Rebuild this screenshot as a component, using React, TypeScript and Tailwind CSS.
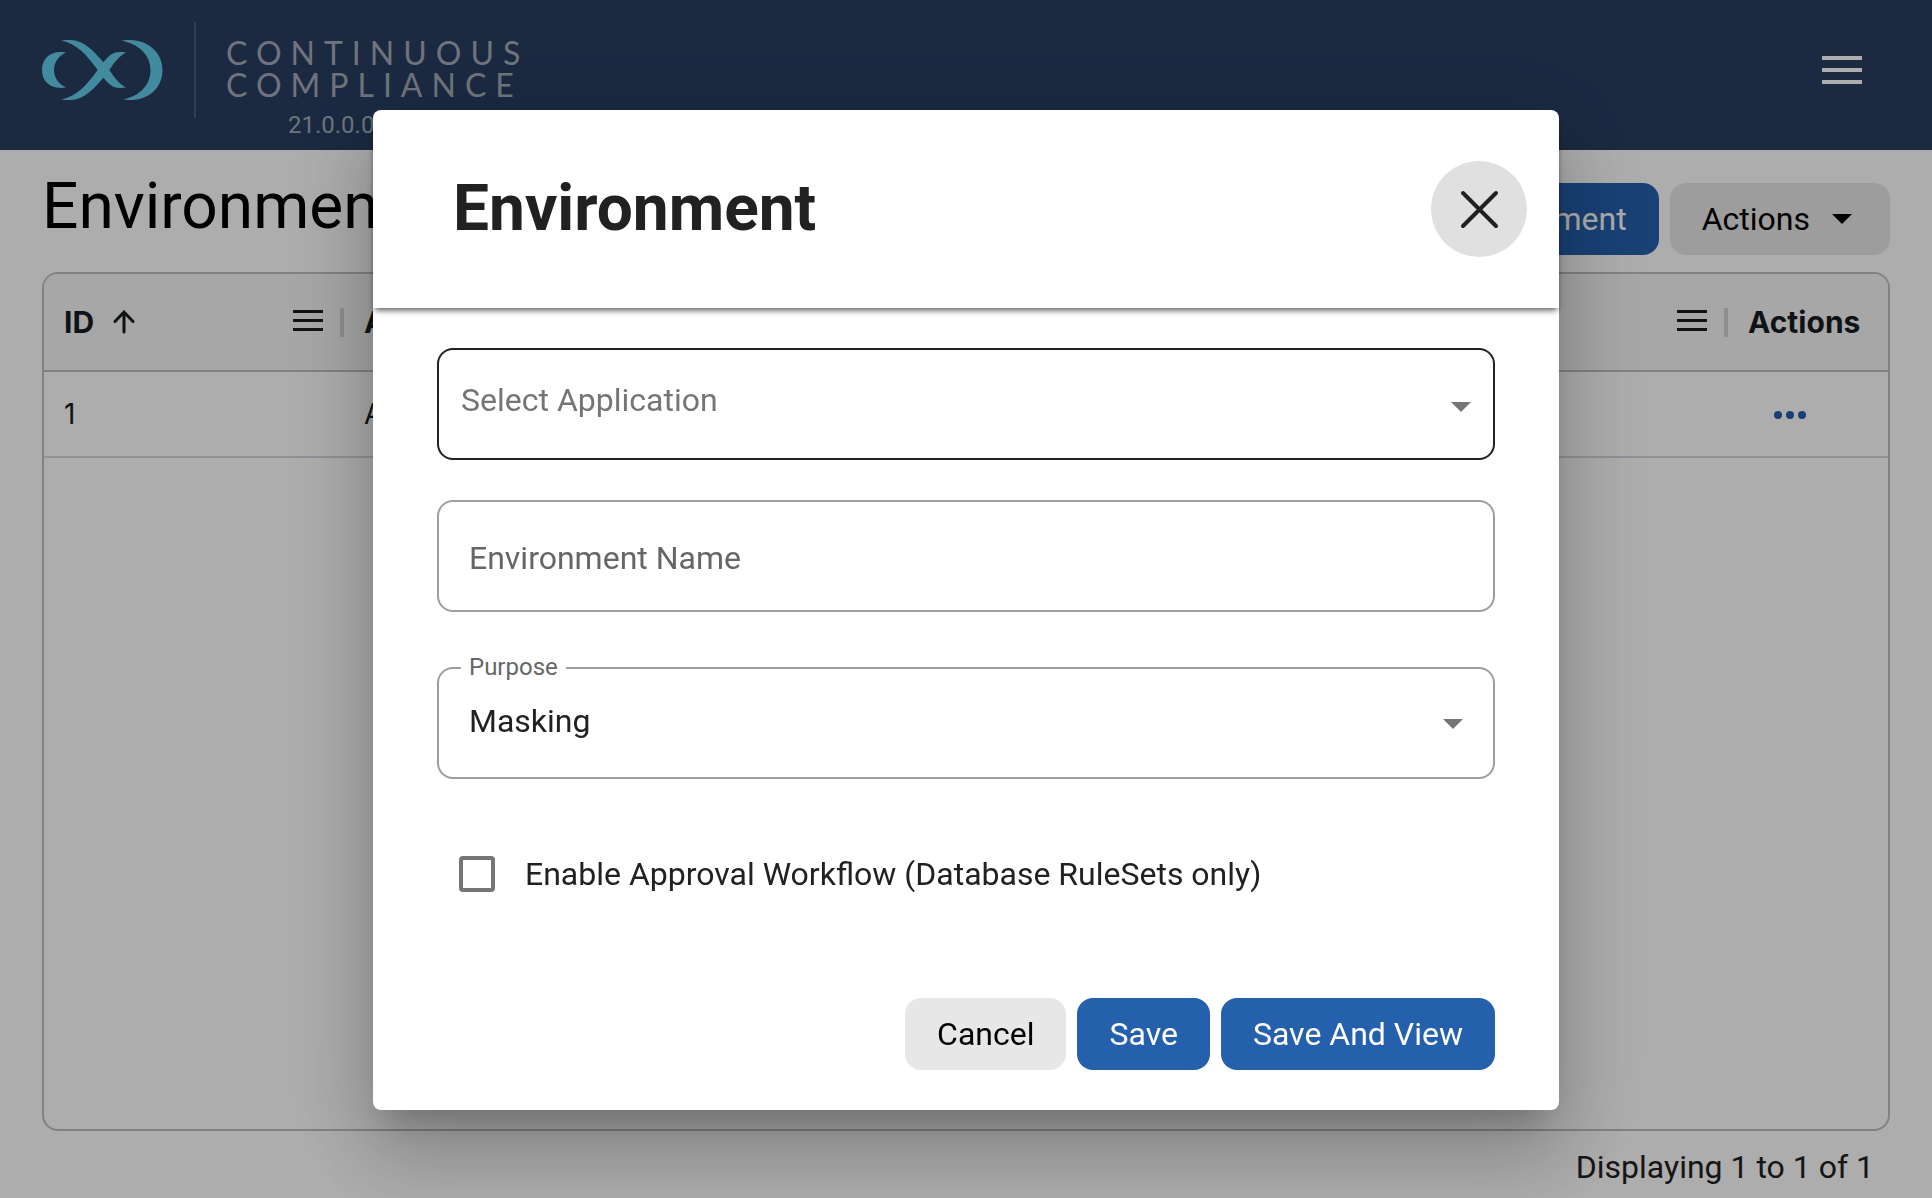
import { useState } from "react";

type EnvironmentRow = {
  id: number;
  application: string;
};

const rows: EnvironmentRow[] = [{ id: 1, application: "App" }];

const applications = ["Select Application", "App"];
const purposes = ["Masking", "Tokenization"];

function Logo() {
  return (
    <svg className="h-[60px] w-[121px] shrink-0" viewBox="0 0 121 60" fill="#62cde9" aria-label="Delphix">
      <path d="M24 12.500C8 10 0 19 0 30C0 41 8 50 24 47.500C16 44 12 37 12 30C12 23 16 16 24 12.500Z" />
      <path d="M19 0.500C25 -0.300 30 -0.300 35 1C46 4 54 14 61.700 22.500L67.300 30C72 37 77 44 84 47.500C73 49 69 47 61.700 38L55.700 30C44 14 35 4 19 0.500Z" />
      <path d="M19 59.500C25 60.300 30 60.300 35 59C46 56 54 46 61.700 37.500L67.300 30C72 23 77 16 84 12.500C73 11 69 13 61.700 22L55.700 30C44 46 35 56 19 59.500Z" />
      <path d="M79 0.500C105 -3 120.500 12 120.500 30C120.500 48 106 63 81 59.500C98 56 108.500 45 108.500 30C108.500 15 97 4 79 0.500Z" />
    </svg>
  );
}

function Caret({ className }: { className?: string }) {
  return (
    <svg className={`h-[10px] w-5 shrink-0 ${className ?? ""}`} viewBox="0 0 20 10" fill="currentColor" aria-hidden="true">
      <path d="M0 0h20L10 10z" />
    </svg>
  );
}

function ColumnTools() {
  return (
    <span className="ml-auto flex items-center gap-[17px]">
      <button type="button" aria-label="Column menu" className="pb-1">
        <svg className="h-[21px] w-[30px]" viewBox="0 0 30 21" fill="currentColor">
          <path d="M0 0h30v3H0zM0 9h30v3H0zM0 18h30v3H0z" />
        </svg>
      </button>
      <span className="h-[29px] w-1 bg-[#d2d2d2]" />
    </span>
  );
}

function Header() {
  return (
    <header className="flex h-[150px] shrink-0 items-start bg-[#283e61] pr-[70px] pl-[42px]">
      <div className="pt-10">
        <Logo />
      </div>
      <div className="mt-[22px] ml-[31px] h-24 w-[2px] shrink-0 bg-[#4a5a76]" />
      <div className="ml-[30px] pt-[37px] text-[#a3abb8]">
        <p className="w-80 font-[Lato] text-[32px] leading-8 tracking-[9px]">CONTINUOUS COMPLIANCE</p>
        <p className="pt-2 pl-[62px] text-2xl leading-8">21.0.0.0</p>
      </div>
      <button type="button" aria-label="Open menu" className="mt-14 ml-auto text-white">
        <svg className="h-7 w-10" viewBox="0 0 40 28" fill="currentColor">
          <path d="M0 0h40v4H0zM0 12h40v4H0zM0 24h40v4H0z" />
        </svg>
      </button>
    </header>
  );
}

function EnvironmentsPage() {
  return (
    <main className="flex flex-1 flex-col px-[42px] pb-[9px]">
      <div className="flex h-[122px] items-start justify-between">
        <h1 className="pt-[17px] text-[64px] leading-[80px] text-black">Environments</h1>
        <div className="flex gap-[11px] pt-[33px]">
          <button type="button" className="h-[72px] rounded-2xl bg-[#2560ad] px-8 text-[32px] text-white">
            Add Environment
          </button>
          <button
            type="button"
            className="flex h-[72px] items-center gap-[22px] rounded-2xl bg-[#e7e7e7] pr-[38px] pl-8 text-[32px] text-black"
          >
            Actions
            <Caret />
          </button>
        </div>
      </div>

      <div className="flex-1 overflow-hidden rounded-2xl border-2 border-[#bfbfbf]">
        <table className="w-full table-fixed border-collapse text-left font-[Inter] text-[#181d1f]">
          <thead className="bg-[#f6f6f6] text-[30px]">
            <tr className="h-[97px] border-b-2 border-[#bfbfbf]">
              <th className="w-[300px] pl-5 font-bold">
                <span className="flex items-center">
                  ID
                  <svg
                    className="ml-[18px] h-6 w-6"
                    viewBox="0 0 24 24"
                    fill="none"
                    stroke="currentColor"
                    strokeWidth={3}
                    strokeLinecap="round"
                  >
                    <path d="M12 22V2M3 11.500L12 2l9 9.500" />
                  </svg>
                  <ColumnTools />
                </span>
              </th>
              <th className="pl-5 font-bold">
                <span className="flex items-center">
                  Application
                  <ColumnTools />
                </span>
              </th>
              <th className="w-[160px] pl-5 font-bold">Actions</th>
            </tr>
          </thead>
          <tbody className="text-[28px]">
            {rows.map((row) => (
              <tr key={row.id} className="h-[86px] border-b-2 border-[#d5d7de]">
                <td className="pl-5">{row.id}</td>
                <td className="pl-5">{row.application}</td>
                <td className="pt-0.5 pl-[46px]">
                  <button type="button" aria-label="Row actions" className="block text-[#2560ad]">
                    <svg className="h-2 w-8" viewBox="0 0 32 8" fill="currentColor">
                      <circle cx="4" cy="4" r="4" />
                      <circle cx="16" cy="4" r="4" />
                      <circle cx="28" cy="4" r="4" />
                    </svg>
                  </button>
                </td>
              </tr>
            ))}
          </tbody>
        </table>
      </div>

      <p className="pt-[14px] pr-4 text-right text-[32px] leading-[44px] text-[#212121]">Displaying 1 to 1 of 1</p>
    </main>
  );
}

function EnvironmentDialog({ onClose }: { onClose: () => void }) {
  const [application, setApplication] = useState(applications[0]);
  const [name, setName] = useState("");
  const [purpose, setPurpose] = useState(purposes[0]);
  const [approval, setApproval] = useState(false);

  return (
    <div className="fixed inset-0 flex items-start justify-center overflow-y-auto bg-black/32 pt-[110px]">
      <div
        role="dialog"
        aria-labelledby="dialog-title"
        className="w-full max-w-[1186px] rounded-lg bg-white text-[#212121] shadow-[0_22px_30px_-14px_rgba(0,0,0,0.2),0_48px_76px_6px_rgba(0,0,0,0.14),0_18px_92px_16px_rgba(0,0,0,0.12)]"
      >
        <div className="flex h-[198px] items-center justify-between rounded-t-lg pr-8 pl-20 shadow-[0_4px_6px_-2px_rgba(0,0,0,0.7)]">
          <h2 id="dialog-title" className="text-[64px] font-bold">
            Environment
          </h2>
          <button
            type="button"
            aria-label="Close"
            onClick={onClose}
            className="flex h-24 w-24 items-center justify-center rounded-full bg-[#e0e0e0]"
          >
            <svg className="h-10 w-10" viewBox="0 0 40 40" fill="none" stroke="currentColor" strokeWidth={4} strokeLinecap="round">
              <path d="M4 4l33 33M37 4l-33 33" />
            </svg>
          </button>
        </div>

        <form className="px-16 pt-10 pb-10 text-[32px]" onSubmit={(e) => e.preventDefault()}>
          <div className="relative">
            <select
              aria-label="Application"
              value={application}
              onChange={(e) => setApplication(e.target.value)}
              className="h-28 w-full appearance-none rounded-2xl border-2 border-[#212121] bg-white pr-16 pb-2 pl-[22px] text-[#757575] outline-none"
            >
              {applications.map((item) => (
                <option key={item}>{item}</option>
              ))}
            </select>
            <Caret className="pointer-events-none absolute top-[54px] right-6 text-[#757575]" />
          </div>

          <input
            type="text"
            aria-label="Environment Name"
            placeholder="Environment Name"
            value={name}
            onChange={(e) => setName(e.target.value)}
            className="mt-10 block h-28 w-full rounded-2xl border-2 border-[#9e9e9e] px-[30px] pt-1 outline-none placeholder:text-[#666666]"
          />

          <div className="relative mt-[55px]">
            <label htmlFor="purpose" className="absolute -top-4 left-6 bg-white px-2 text-2xl leading-8 text-[#666666]">
              Purpose
            </label>
            <select
              id="purpose"
              value={purpose}
              onChange={(e) => setPurpose(e.target.value)}
              className="h-28 w-full appearance-none rounded-2xl border-2 border-[#9e9e9e] bg-white pr-16 pb-1 pl-[30px] outline-none"
            >
              {purposes.map((item) => (
                <option key={item}>{item}</option>
              ))}
            </select>
            <Caret className="pointer-events-none absolute top-[52px] right-8 text-[#757575]" />
          </div>

          <label className="mt-[55px] flex h-20 items-center gap-[30px] pl-[22px]">
            <input
              type="checkbox"
              checked={approval}
              onChange={(e) => setApproval(e.target.checked)}
              className="h-9 w-9 appearance-none rounded border-4 border-[#757575] checked:bg-[#2560ad]"
            />
            Enable Approval Workflow (Database RuleSets only)
          </label>

          <div className="flex justify-end gap-[11px] pt-[84px]">
            <button type="button" onClick={onClose} className="h-[72px] rounded-2xl bg-[#e7e7e7] px-8 text-black">
              Cancel
            </button>
            <button type="submit" className="h-[72px] rounded-2xl bg-[#2560ad] px-8 text-white">
              Save
            </button>
            <button type="submit" className="h-[72px] rounded-2xl bg-[#2560ad] px-8 text-white">
              Save And View
            </button>
          </div>
        </form>
      </div>
    </div>
  );
}

export default function App() {
  const [dialogOpen, setDialogOpen] = useState(true);

  return (
    <div className="flex min-h-screen flex-col bg-white font-[Roboto,sans-serif]">
      <Header />
      <EnvironmentsPage />
      {dialogOpen && <EnvironmentDialog onClose={() => setDialogOpen(false)} />}
    </div>
  );
}
